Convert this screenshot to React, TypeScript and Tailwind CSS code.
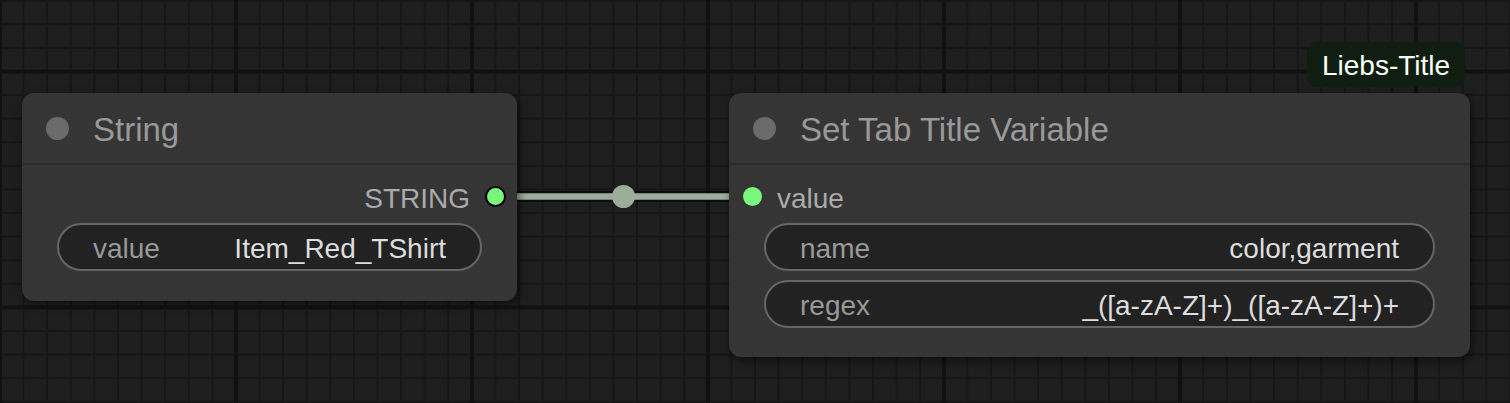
import React from "react";

const font = "font-['Liberation_Sans',Arial,sans-serif]";

function Widget({ label, value }: { label: string; value: string }) {
  return (
    <div className="mx-[35px] flex h-[48px] items-center justify-between rounded-full border-2 border-[#666] bg-[#222] px-[34px] text-[28px] leading-none">
      <span className="pt-[3px] text-[#999]">{label}</span>
      <span className="pt-[3px] text-[#ddd]">{value}</span>
    </div>
  );
}

function Title({ text }: { text: string }) {
  return (
    <div className="flex h-[72px] shrink-0 items-center gap-[24px] border-b-2 border-[#2c2c2c] pl-[24px]">
      <span className="h-[23px] w-[23px] rounded-full bg-[#6b6b6b]" />
      <span className="pt-[3px] text-[33px] leading-none text-[#999]">{text}</span>
    </div>
  );
}

export default function App() {
  return (
    <div
      className={`${font} relative h-[403px] w-[1510px] overflow-hidden bg-[#1e1e1e] [background-image:linear-gradient(to_right,#111_4px,transparent_4px),linear-gradient(to_bottom,#111_4px,transparent_4px),linear-gradient(to_right,#161616_2px,transparent_2px),linear-gradient(to_bottom,#161616_2px,transparent_2px)] [background-size:236px_236px,236px_236px,23.6px_23.6px,23.6px_23.6px] [background-position:-2px_0,0_69.5px,-1px_0,0_23.3px]`}
    >
      {/* link between the two nodes */}
      <svg className="absolute left-0 top-0" width="1510" height="403">
        <line x1="496" y1="196.5" x2="752" y2="196.5" stroke="rgba(0,0,0,0.55)" strokeWidth="11" />
        <line x1="496" y1="196.5" x2="752" y2="196.5" stroke="#9cad9c" strokeWidth="6.5" />
        <circle cx="623.5" cy="196.5" r="11.5" fill="#9cad9c" />
      </svg>

      {/* String node */}
      <div className="absolute left-[22px] top-[93px] flex h-[208px] w-[495px] flex-col rounded-[12px] bg-[#353535] shadow-[2px_3px_8px_rgba(0,0,0,0.55)]">
        <Title text="String" />
        <div className="mt-[12px] flex h-[38px] items-center justify-end gap-[15px] pr-[11px]">
          <span className="pt-[6px] text-[28px] leading-none text-[#aaa]">STRING</span>
          <span className="h-[21px] w-[21px] rounded-full border-2 border-black bg-[#7af77a]" />
        </div>
        <div className="mt-[8px]">
          <Widget label="value" value="Item_Red_TShirt" />
        </div>
      </div>

      {/* Set Tab Title Variable node */}
      <div className="absolute left-[729px] top-[93px] flex h-[264px] w-[741px] flex-col rounded-[12px] bg-[#353535] shadow-[2px_3px_8px_rgba(0,0,0,0.55)]">
        <Title text="Set Tab Title Variable" />
        <div className="mt-[12px] flex h-[38px] items-center gap-[15px] pl-[14px]">
          <span className="h-[19px] w-[19px] rounded-full bg-[#7af77a]" />
          <span className="pt-[6px] text-[28px] leading-none text-[#aaa]">value</span>
        </div>
        <div className="mt-[8px] flex flex-col gap-[9px]">
          <Widget label="name" value="color,garment" />
          <Widget label="regex" value="_([a-zA-Z]+)_([a-zA-Z]+)+" />
        </div>
      </div>

      {/* group badge */}
      <div className="absolute left-[1307px] top-[42px] flex h-[45px] w-[158px] items-center justify-center rounded-[10px] bg-[#0f1e10] pt-[3px] text-[28px] leading-none text-white">
        Liebs-Title
      </div>
    </div>
  );
}
